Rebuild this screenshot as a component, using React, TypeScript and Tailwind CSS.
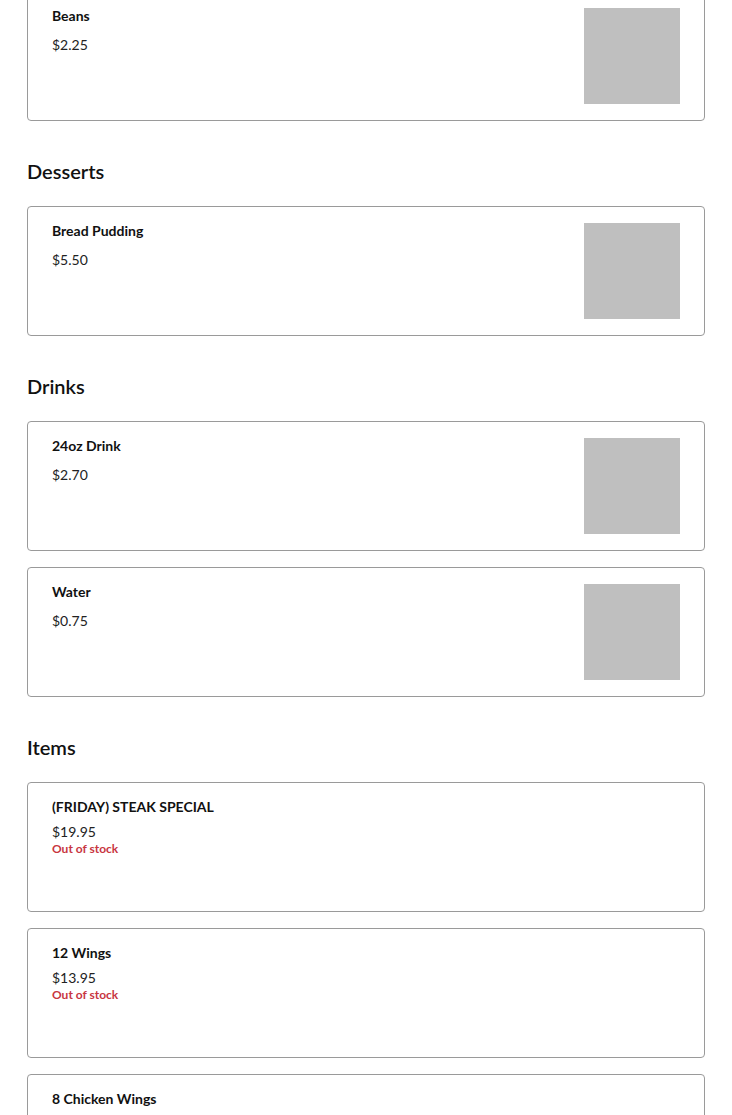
const sections = [
  { title: '', items: [{ name: 'Beans', price: '$2.25', image: true }] },
  { title: 'Desserts', items: [{ name: 'Bread Pudding', price: '$5.50', image: true }] },
  {
    title: 'Drinks',
    items: [
      { name: '24oz Drink', price: '$2.70', image: true },
      { name: 'Water', price: '$0.75', image: true },
    ],
  },
  {
    title: 'Items',
    items: [
      { name: '(FRIDAY) STEAK SPECIAL', price: '$19.95', out: true },
      { name: '12 Wings', price: '$13.95', out: true },
      { name: '8 Chicken Wings', price: '$9.95', out: true },
    ],
  },
];

type Item = { name: string; price: string; image?: boolean; out?: boolean };

function ItemCard({ item }: { item: Item }) {
  return (
    <div className="flex h-[130px] justify-between rounded-[4px] border border-[#9a9a9a] bg-white pl-6 pr-6 pt-4">
      <div className="flex flex-col">
        <div className="text-[14px] font-bold leading-[16px] text-[#111]">{item.name}</div>
        {item.out ? (
          <>
            <div className="mt-[8px] text-[14px] leading-[18px] text-[#222]">{item.price}</div>
            <div className="text-[12px] font-bold leading-[16px] text-[#c8363f]">Out of stock</div>
          </>
        ) : (
          <div className="mt-[12px] text-[14px] leading-[18px] text-[#222]">{item.price}</div>
        )}
      </div>
      {item.image && <div className="h-24 w-24 shrink-0 bg-[#bfbfbf]" />}
    </div>
  );
}

export default function App() {
  return (
    <div className="min-h-screen overflow-hidden bg-white px-[27px] font-['Lato','Liberation_Sans',sans-serif]">
      <div className="-mt-[9px]">
        {sections.map((s, i) => (
          <section key={i}>
            {s.title && (
              <h2 className="mb-[21px] mt-[36px] text-[20px] font-semibold leading-[28px] text-[#111]">
                {s.title}
              </h2>
            )}
            <div className="flex flex-col gap-4">
              {s.items.map((it) => (
                <ItemCard key={it.name} item={it} />
              ))}
            </div>
          </section>
        ))}
      </div>
    </div>
  );
}
